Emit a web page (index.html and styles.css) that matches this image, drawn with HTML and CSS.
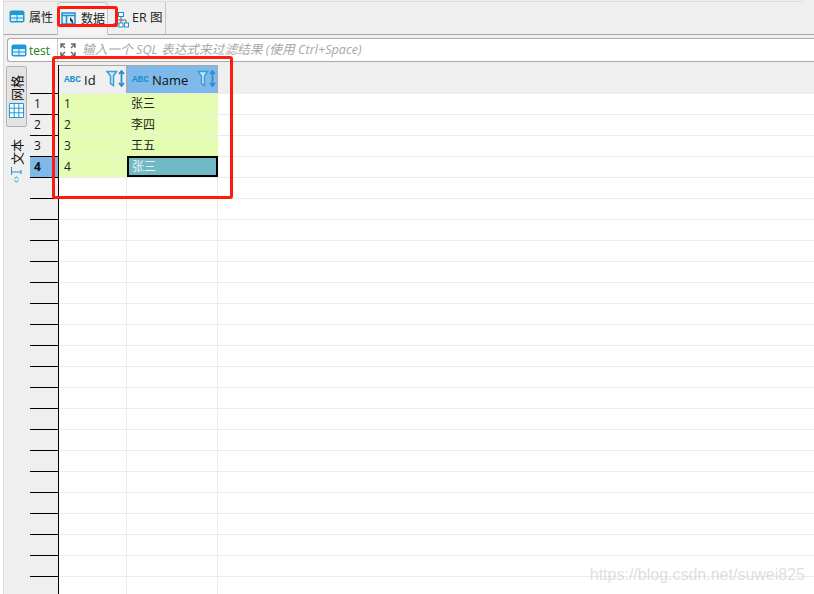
FILE: index.html
```html
<!DOCTYPE html>
<html lang="zh">
<head>
<meta charset="utf-8">
<title>数据</title>
<link rel="stylesheet" href="styles.css">
</head>
<body>
<svg class="defs" width="0" height="0">
  <symbol id="tbl" viewBox="0 0 16 13">
    <rect x="0.500" y="0.500" width="15" height="12" rx="2" fill="#1c9ad6"/>
    <rect x="2" y="5" width="5.500" height="2.500" fill="#d8eefa"/><rect x="8.500" y="5" width="5.500" height="2.500" fill="#d8eefa"/>
    <rect x="2" y="8.500" width="5.500" height="2.500" fill="#d8eefa"/><rect x="8.500" y="8.500" width="5.500" height="2.500" fill="#d8eefa"/>
  </symbol>
  <symbol id="flt" viewBox="0 0 19 17">
    <path d="M1 1.500h9.500l-3 4.500v9.500l-3-2V6z" fill="#c9e7f7" stroke="#3d9fd6" stroke-width="1.500"/>
    <path d="M15.500 1v15M13 4l2.500-3L18 4M13 13l2.500 3 2.500-3" fill="none" stroke="#2a8fcf" stroke-width="1.800"/>
  </symbol>
</svg>

<div class="app">
  <nav class="tabs">
    <div class="tab tab-attr">
      <svg class="ic"><use href="#tbl"/></svg><span>属性</span>
    </div>
    <div class="tab tab-on">
      <svg class="ic" viewBox="0 0 16 13"><rect x="1" y="1" width="13" height="11" fill="#e2f2fb" stroke="#1f8fd0" stroke-width="1.500"/><path d="M1 3.500h13M5.500 3v9" stroke="#1f8fd0" stroke-width="1.500"/><path d="M9 5l3 3.500V12l-3-3.500z" fill="#333"/></svg><span>数据</span>
    </div>
    <div class="tab tab-er">
      <svg class="ic ic-er" viewBox="0 0 16 16"><path d="M8 4v4M3 11V8h10v3M8 8v3" fill="none" stroke="#666"/><rect x="5.500" y="0.500" width="5" height="4" fill="#fff" stroke="#1f8fd0"/><rect x="0.500" y="11" width="4" height="4" fill="#1f8fd0"/><rect x="6" y="11" width="4" height="4" fill="#fff" stroke="#1f8fd0"/><rect x="11.500" y="11" width="4" height="4" fill="#fff" stroke="#1f8fd0"/></svg><span>ER 图</span>
    </div>
  </nav>

  <div class="filter">
    <div class="source"><svg class="ic"><use href="#tbl"/></svg><span class="source-name">test</span></div>
    <svg class="expand" viewBox="0 0 16 14"><path d="M1 5V1h4M1 1l4 4M15 5V1h-4M15 1l-4 4M1 9v4h4M1 13l4-4M15 9v4h-4M15 13l-4-4" fill="none" stroke="#666" stroke-width="1.400"/></svg>
    <div class="hint">输入一个 SQL 表达式来过滤结果 (使用 Ctrl+Space)</div>
  </div>

  <div class="body">
    <aside class="side">
      <div class="vtab vtab-on">
        <span class="vlabel">网格</span>
        <svg class="gridic" viewBox="0 0 15 15"><path d="M.5.500h14v14H.5zM.5 5.200h14M.5 9.800h14M5.200.500v14M9.800.500v14" fill="#fff" stroke="#1c9ad6"/></svg>
      </div>
      <div class="vtab">
        <span class="vlabel">文本</span>
        <svg class="textic" viewBox="0 0 11 16"><path d="M.5 0v8M.5 5h9.500M10 3v4" fill="none" stroke="#1c9ad6" stroke-width="1.100"/><path d="M3.500 11.500L5.500 10l2 1.500M3.500 13.500l2 1.500 2-1.500" fill="none" stroke="#1c9ad6"/></svg>
      </div>
    </aside>

    <section class="grid">
      <div class="head">
        <div class="corner"></div>
        <div class="hcell col-id"><span class="abc">ABC</span><span class="hname">Id</span><svg class="flt"><use href="#flt"/></svg></div>
        <div class="hcell col-name hcell-on"><span class="abc">ABC</span><span class="hname">Name</span><svg class="flt"><use href="#flt"/></svg></div>
        <div class="hfill"></div>
      </div>
      <div class="row"><div class="num">1</div><div class="cell col-id val">1</div><div class="cell col-name val">张三</div><div class="fill"></div></div>
      <div class="row"><div class="num">2</div><div class="cell col-id val">2</div><div class="cell col-name val">李四</div><div class="fill"></div></div>
      <div class="row"><div class="num">3</div><div class="cell col-id val">3</div><div class="cell col-name val">王五</div><div class="fill"></div></div>
      <div class="row"><div class="num num-on">4</div><div class="cell col-id val">4</div><div class="cell col-name sel">张三</div><div class="fill"></div></div>
      <div class="row"><div class="num"></div><div class="cell col-id"></div><div class="cell col-name"></div><div class="fill"></div></div>
      <div class="row"><div class="num"></div><div class="cell col-id"></div><div class="cell col-name"></div><div class="fill"></div></div>
      <div class="row"><div class="num"></div><div class="cell col-id"></div><div class="cell col-name"></div><div class="fill"></div></div>
      <div class="row"><div class="num"></div><div class="cell col-id"></div><div class="cell col-name"></div><div class="fill"></div></div>
      <div class="row"><div class="num"></div><div class="cell col-id"></div><div class="cell col-name"></div><div class="fill"></div></div>
      <div class="row"><div class="num"></div><div class="cell col-id"></div><div class="cell col-name"></div><div class="fill"></div></div>
      <div class="row"><div class="num"></div><div class="cell col-id"></div><div class="cell col-name"></div><div class="fill"></div></div>
      <div class="row"><div class="num"></div><div class="cell col-id"></div><div class="cell col-name"></div><div class="fill"></div></div>
      <div class="row"><div class="num"></div><div class="cell col-id"></div><div class="cell col-name"></div><div class="fill"></div></div>
      <div class="row"><div class="num"></div><div class="cell col-id"></div><div class="cell col-name"></div><div class="fill"></div></div>
      <div class="row"><div class="num"></div><div class="cell col-id"></div><div class="cell col-name"></div><div class="fill"></div></div>
      <div class="row"><div class="num"></div><div class="cell col-id"></div><div class="cell col-name"></div><div class="fill"></div></div>
      <div class="row"><div class="num"></div><div class="cell col-id"></div><div class="cell col-name"></div><div class="fill"></div></div>
      <div class="row"><div class="num"></div><div class="cell col-id"></div><div class="cell col-name"></div><div class="fill"></div></div>
      <div class="row"><div class="num"></div><div class="cell col-id"></div><div class="cell col-name"></div><div class="fill"></div></div>
      <div class="row"><div class="num"></div><div class="cell col-id"></div><div class="cell col-name"></div><div class="fill"></div></div>
      <div class="row"><div class="num"></div><div class="cell col-id"></div><div class="cell col-name"></div><div class="fill"></div></div>
      <div class="row"><div class="num"></div><div class="cell col-id"></div><div class="cell col-name"></div><div class="fill"></div></div>
      <div class="row"><div class="num"></div><div class="cell col-id"></div><div class="cell col-name"></div><div class="fill"></div></div>
      <div class="row"><div class="num"></div><div class="cell col-id"></div><div class="cell col-name"></div><div class="fill"></div></div>
    </section>
  </div>
</div>

<div class="mark mark-tab"></div>
<div class="mark mark-grid"></div>
<div class="watermark">https://blog.csdn.net/suwei825</div>
</body>
</html>
```
FILE: styles.css
```css
* { box-sizing: border-box; }
html, body { margin: 0; height: 100%; overflow: hidden; background: #fff; }
body {
  font-family: "Open Sans", "Noto Sans CJK SC", sans-serif;
  font-size: 12px;
  color: #222;
}
.defs { position: absolute; }

.app {
  height: 594px;
  margin-left: 3px;
  padding-top: 1px;
  display: flex;
  flex-direction: column;
  background: #efefef;
  border-left: 1px solid #dcdcdc;
}
.tabs {
  height: 34px;
  padding-top: 1px;
  display: flex;
  flex: none;
  box-shadow: inset 0 -1px 0 #a8a8a8;
  background: linear-gradient(#dcdcdc 0 1px, transparent 1px) no-repeat 0 0 / 798px 100%;
}
.tab {
  height: 32px;
  display: flex;
  align-items: center;
  gap: 4px;
  flex: none;
  padding-bottom: 3px;
}
.tab-attr { width: 53px; padding-left: 5px; }
.tab-on {
  width: 51px;
  height: 33px;
  background: #f3f3f3;
  border: 1px solid #c6c6c6;
  border-bottom: 0;
  border-radius: 4px 4px 0 0;
  padding: 0 0 2px 3px;
}
.tab-er {
  width: 58px;
  padding-left: 5px;
  gap: 3px;
  border-right: 1px solid #c6c6c6;
  font-size: 12.500px;
}
.ic { width: 16px; height: 13px; flex: none; }
.ic-er { height: 16px; margin-top: 7px; }

.filter {
  height: 24px;
  margin: 3px 0 0 3px;
  display: flex;
  align-items: center;
  flex: none;
  background: #fff;
  border: 1px solid #aaa;
  border-right: 0;
  border-radius: 3px 0 0 3px;
}
.source {
  width: 50px;
  height: 100%;
  display: flex;
  align-items: center;
  gap: 2px;
  padding-left: 3px;
  border-right: 1px solid #c8c8c8;
}
.source-name { color: #16800f; font-size: 12px; }
.expand { width: 16px; height: 14px; margin: 0 6px 0 2px; flex: none; }
.hint {
  color: #a8a8a8;
  font-style: italic;
  font-size: 12.700px;
  line-height: 20px;
  margin-top: -2px;
  white-space: nowrap;
}

.body { flex: 1; display: flex; min-height: 0; }
.side {
  width: 26px;
  padding: 4px 0 0 2px;
  display: flex;
  flex-direction: column;
  gap: 4px;
  flex: none;
}
.vtab {
  width: 21px;
  height: 61px;
  display: flex;
  flex-direction: column;
  align-items: center;
  gap: 2px;
  padding-top: 7px;
  border: 1px solid transparent;
}
.vtab-on { background: #e3e3e3; border-color: #b4b4b4; border-radius: 2px; padding-top: 8px; }
.vlabel {
  writing-mode: vertical-rl;
  text-orientation: sideways;
  transform: rotate(180deg);
  font-size: 13px;
  line-height: 16px;
  color: #111;
}
.gridic { width: 15px; height: 15px; flex: none; }
.textic { width: 11px; height: 16px; flex: none; }

.grid { flex: 1; padding-top: 3px; min-width: 0; }
.head { height: 28px; display: flex; }
.corner { width: 29px; border-right: 1px solid #000; flex: none; }
.hcell {
  display: flex;
  align-items: center;
  padding-left: 5px;
  border-top: 1px solid #a8a8a8;
  border-right: 1px solid #a8a8a8;
  position: relative;
}
.hcell-on { background: #7fb9ea; }
.hfill { flex: 1; }
.col-id { width: 68px; flex: none; }
.col-name { width: 91px; flex: none; }
.abc {
  font: 700 9.500px/10px "Liberation Mono", monospace;
  letter-spacing: -.100px;
  color: #1c8fd0;
  width: 17px;
  flex: none;
}
.hname { margin-left: 3px; font-size: 13px; color: #111; }
.flt { position: absolute; right: 1px; top: 4px; width: 19px; height: 17px; }

.row { height: 21px; display: flex; background: #fff; }
.fill { flex: 1; border-top: 1px solid #ececec; }
.num {
  width: 29px;
  flex: none;
  height: 21px;
  background: #efefef;
  border-top: 1px solid #000;
  border-right: 1px solid #000;
  padding-left: 4px;
  line-height: 20px;
  color: #111;
}
.num-on { background: #7fb9ea; font-weight: 700; }
.cell {
  height: 21px;
  padding-left: 5px;
  line-height: 20px;
  border-top: 1px solid #ececec;
  border-right: 1px solid #ececec;
  color: #222;
  font-size: 12px;
}
.val { background: #e4fdb3; border-right-color: #e4fdb3; border-top-color: #ececec; }
.cell.col-name { padding-left: 4px; }
.cell.sel {
  background: #72b9c6;
  border: 2px solid #000;
  color: #e8f4f6;
  line-height: 17px;
  padding-left: 3px;
}

.mark {
  position: absolute;
  border: 3px solid #ff1a0e;
  border-radius: 3px;
}
.mark-tab { left: 57px; top: 6px; width: 61px; height: 21px; }
.mark-grid { left: 52px; top: 56px; width: 181px; height: 143px; }
.watermark {
  position: absolute;
  right: 9px;
  top: 566px;
  font-family: "Liberation Sans", sans-serif;
  font-size: 16px;
  color: rgba(200, 200, 200, .6);
  white-space: nowrap;
}
```
